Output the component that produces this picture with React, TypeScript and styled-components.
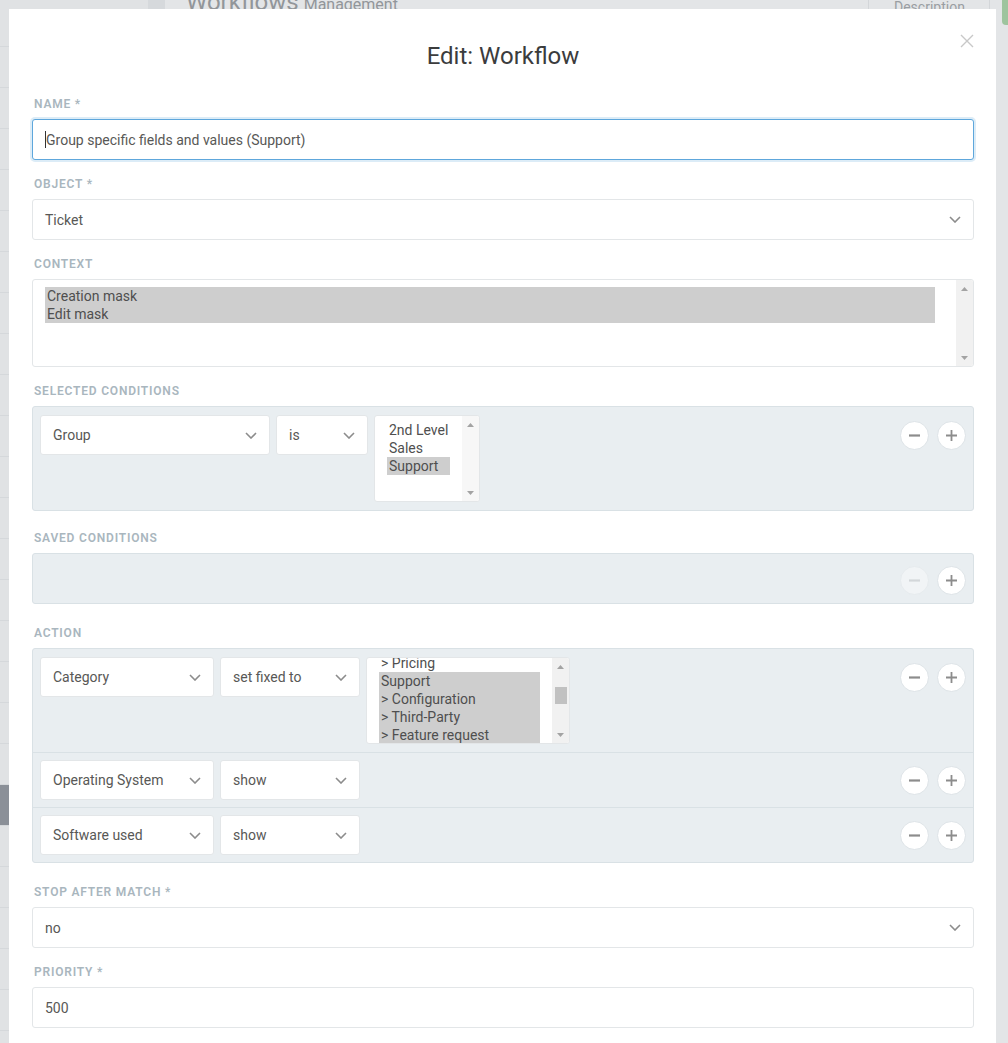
import React from 'react'
import styled, { createGlobalStyle } from 'styled-components'

const GlobalStyle = createGlobalStyle`
  html, body {
    margin: 0;
    padding: 0;
  }
  body {
    background: #dfe1e3;
    font-family: Roboto, 'Noto Sans', sans-serif;
    overflow: hidden;
  }
  * {
    box-sizing: border-box;
  }
`

// ---- dimmed app behind the modal ----

const Page = styled.div`
  position: relative;
  display: flex;
  width: 1008px;
  height: 1043px;
  overflow: hidden;
`

const Nav = styled.div`
  width: 148px;
  flex-shrink: 0;
  padding-top: 6px;
  display: flex;
  flex-direction: column;
  background: #e0e2e4;
`

const NavItem = styled.div<{ $active?: boolean }>`
  height: 41px;
  flex-shrink: 0;
  border-bottom: 1px solid #d5d8db;
  background: ${({ $active }) => ($active ? '#8b9098' : 'transparent')};
`

const NavDivider = styled.div`
  width: 17px;
  flex-shrink: 0;
  background: #d6d9dc;
`

const Main = styled.div`
  flex: 1;
  background: #e3e5e7;
`

const MainHeader = styled.div`
  display: flex;
  align-items: baseline;
  height: 30px;
  margin-top: -10px;
  padding-left: 21px;
  color: #92969a;
`

const PageTitle = styled.span`
  font-size: 24px;
  line-height: 24px;
  margin-right: 5px;
`

const PageSubtitle = styled.span`
  font-size: 16px;
`

const TabCell = styled.div`
  margin-left: auto;
  align-self: flex-start;
  width: 122px;
  height: 40px;
  padding: 10px 0 0 25px;
  border-left: 1px solid #d3d6d9;
  border-right: 1px solid #d3d6d9;
  font-size: 14px;
  line-height: 14px;
  color: #9a9ea2;
`

const GreenButton = styled.div`
  align-self: flex-start;
  flex-shrink: 0;
  width: 90px;
  height: 35px;
  margin-left: 12px;
  margin-right: -84px;
  border-radius: 4px;
  background: #9ec49e;
`

// ---- modal ----

const Modal = styled.div`
  position: absolute;
  top: 9px;
  left: 9px;
  width: 987px;
  height: 1100px;
  padding: 0 22px 0 23px;
  background: #fff;
  color: #585856;
`

const ModalHeader = styled.div`
  position: relative;
  padding: 32px 0 25px;
  text-align: center;
`

const Title = styled.h1`
  margin: 0;
  font-size: 24px;
  font-weight: 400;
  line-height: 30px;
  color: #3b3c3d;
`

const Close = styled.div`
  position: absolute;
  top: 24px;
  right: 0;
  width: 14px;
  height: 14px;
  color: #c8c8c8;
`

const Field = styled.div<{ $after?: number }>`
  display: flex;
  flex-direction: column;
  gap: 6px;
  margin-bottom: ${({ $after }) => $after ?? 16}px;
`

const Label = styled.div`
  padding-left: 2px;
  font-size: 12px;
  line-height: 17px;
  font-weight: 600;
  letter-spacing: 0.8px;
  text-transform: uppercase;
  color: #a9b6be;
`

const InputBox = styled.div<{ $focused?: boolean }>`
  display: flex;
  align-items: center;
  height: 41px;
  padding: 0 12px;
  border: 1px solid ${({ $focused }) => ($focused ? '#5ea7dc' : '#e3e6e8')};
  border-radius: 3px;
  box-shadow: ${({ $focused }) => ($focused ? '0 0 0 2px rgba(94, 167, 220, 0.22)' : 'none')};
  background: #fff;
  font-size: 14px;
  color: #585856;
`

const Caret = styled.span`
  display: inline-block;
  width: 1px;
  height: 17px;
  background: #333;
`

const SelectBox = styled.div<{ $width?: number; $height?: number }>`
  display: flex;
  align-items: center;
  justify-content: space-between;
  flex-shrink: 0;
  width: ${({ $width }) => ($width ? `${$width}px` : '100%')};
  height: ${({ $height }) => $height ?? 41}px;
  padding: 0 12px;
  border: 1px solid #e3e6e8;
  border-radius: 3px;
  background: #fff;
  font-size: 14px;
  color: #585856;
`

const ListBox = styled.div<{ $width?: number; $height: number }>`
  display: flex;
  flex-shrink: 0;
  width: ${({ $width }) => ($width ? `${$width}px` : '100%')};
  height: ${({ $height }) => $height}px;
  border: 1px solid #e3e6e8;
  border-radius: 3px;
  background: #fff;
  overflow: hidden;
`

const Options = styled.div<{ $pad: string; $shift?: number }>`
  flex: 1;
  padding: ${({ $pad }) => $pad};
  margin-top: ${({ $shift }) => -($shift ?? 0)}px;
`

const Option = styled.div<{ $selected?: boolean }>`
  height: 18px;
  padding: 0 2px;
  font-size: 14px;
  line-height: 18px;
  white-space: nowrap;
  color: #4f4f4f;
  background: ${({ $selected }) => ($selected ? '#cecece' : 'transparent')};
`

const Track = styled.div<{ $light?: boolean }>`
  display: flex;
  flex-direction: column;
  align-items: center;
  width: 17px;
  flex-shrink: 0;
  background: ${({ $light }) => ($light ? '#f7f7f7' : '#f1f1f1')};
`

const ArrowCell = styled.div`
  display: flex;
  align-items: center;
  justify-content: center;
  width: 17px;
  height: 17px;
  flex-shrink: 0;
`

const TrackSpace = styled.div`
  flex: 1;
`

const Thumb = styled.div<{ $top: number }>`
  width: 12px;
  height: 17px;
  margin-top: ${({ $top }) => $top}px;
  background: #c1c1c1;
`

const RuleBox = styled.div`
  display: flex;
  flex-direction: column;
  border: 1px solid #d9e1e5;
  border-radius: 3px;
  background: #e9eef1;
`

const RuleRow = styled.div<{ $tall?: boolean }>`
  display: flex;
  align-items: flex-start;
  gap: 6px;
  padding: ${({ $tall }) => ($tall ? '8px 7px' : '7px')};

  & + & {
    border-top: 1px solid #d9e1e5;
  }
`

const EmptyRow = styled.div`
  display: flex;
  justify-content: flex-end;
  padding: 12px 7px 8px;
`

const Buttons = styled.div<{ $height?: number }>`
  display: flex;
  align-items: center;
  gap: 8px;
  height: ${({ $height }) => $height ?? 40}px;
  margin-left: auto;
`

const CircleButton = styled.div<{ $disabled?: boolean }>`
  display: flex;
  align-items: center;
  justify-content: center;
  width: 29px;
  height: 29px;
  border-radius: 50%;
  border: 1px solid ${({ $disabled }) => ($disabled ? '#e6ebee' : '#dde3e7')};
  background: ${({ $disabled }) => ($disabled ? '#f1f4f6' : '#fff')};
  color: ${({ $disabled }) => ($disabled ? '#d3d7da' : '#8c8c8c')};
`

const Chevron = () => (
  <svg width="12" height="7" viewBox="0 0 12 7" fill="none">
    <path d="M1 1l5 5 5-5" stroke="#8c8c8c" strokeWidth="1.6" />
  </svg>
)

const Minus = () => (
  <svg width="11" height="11" viewBox="0 0 11 11">
    <path d="M0 5.5h11" stroke="currentColor" strokeWidth="2.2" />
  </svg>
)

const Plus = () => (
  <svg width="11" height="11" viewBox="0 0 11 11">
    <path d="M0 5.5h11M5.5 0v11" stroke="currentColor" strokeWidth="1.8" />
  </svg>
)

const ArrowUp = () => (
  <svg width="7" height="4" viewBox="0 0 7 4">
    <path d="M0 4h7L3.5 0z" fill="#a3a3a3" />
  </svg>
)

const ArrowDown = () => (
  <svg width="7" height="4" viewBox="0 0 7 4">
    <path d="M0 0h7L3.5 4z" fill="#a3a3a3" />
  </svg>
)

type Opt = { label: string; selected?: boolean }

const MultiSelect = ({
  options,
  width,
  height,
  pad,
  shift,
  thumb,
  light,
}: {
  options: Opt[]
  width?: number
  height: number
  pad: string
  shift?: number
  thumb?: number
  light?: boolean
}) => (
  <ListBox $width={width} $height={height}>
    <Options $pad={pad} $shift={shift}>
      {options.map((o) => (
        <Option key={o.label} $selected={o.selected}>
          {o.label}
        </Option>
      ))}
    </Options>
    <Track $light={light}>
      <ArrowCell>
        <ArrowUp />
      </ArrowCell>
      {thumb !== undefined && <Thumb $top={thumb} />}
      <TrackSpace />
      <ArrowCell>
        <ArrowDown />
      </ArrowCell>
    </Track>
  </ListBox>
)

const Select = ({ value, width, height }: { value: string; width?: number; height?: number }) => (
  <SelectBox $width={width} $height={height}>
    <span>{value}</span>
    <Chevron />
  </SelectBox>
)

const RowButtons = ({ disabled, height }: { disabled?: boolean; height?: number }) => (
  <Buttons $height={height}>
    <CircleButton $disabled={disabled}>
      <Minus />
    </CircleButton>
    <CircleButton>
      <Plus />
    </CircleButton>
  </Buttons>
)

export default function App() {
  return (
    <Page>
      <GlobalStyle />
      <Nav>
        {Array.from({ length: 26 }).map((_, i) => (
          <NavItem key={i} $active={i === 19} />
        ))}
      </Nav>
      <NavDivider />
      <Main>
        <MainHeader>
          <PageTitle>Workflows</PageTitle>
          <PageSubtitle>Management</PageSubtitle>
          <TabCell>Description</TabCell>
          <GreenButton />
        </MainHeader>
      </Main>

      <Modal>
        <ModalHeader>
          <Title>Edit: Workflow</Title>
          <Close>
            <svg width="14" height="14" viewBox="0 0 14 14">
              <path d="M1 1l12 12M13 1L1 13" stroke="currentColor" strokeWidth="1.4" />
            </svg>
          </Close>
        </ModalHeader>

        <Field>
          <Label>Name *</Label>
          <InputBox $focused>
            <Caret />
            Group specific fields and values (Support)
          </InputBox>
        </Field>

        <Field>
          <Label>Object *</Label>
          <Select value="Ticket" />
        </Field>

        <Field>
          <Label>Context</Label>
          <MultiSelect
            height={88}
            pad="7px 21px 7px 12px"
            options={[
              { label: 'Creation mask', selected: true },
              { label: 'Edit mask', selected: true },
            ]}
          />
        </Field>

        <Field $after={19}>
          <Label>Selected Conditions</Label>
          <RuleBox>
            <RuleRow $tall>
              <Select value="Group" width={230} height={40} />
              <Select value="is" width={92} height={40} />
              <MultiSelect
                width={106}
                height={87}
                pad="5px 12px"
                light
                options={[
                  { label: '2nd Level' },
                  { label: 'Sales' },
                  { label: 'Support', selected: true },
                ]}
              />
              <RowButtons />
            </RuleRow>
          </RuleBox>
        </Field>

        <Field $after={21}>
          <Label>Saved Conditions</Label>
          <RuleBox>
            <EmptyRow>
              <RowButtons disabled height={29} />
            </EmptyRow>
          </RuleBox>
        </Field>

        <Field $after={21}>
          <Label>Action</Label>
          <RuleBox>
            <RuleRow $tall>
              <Select value="Category" width={174} height={40} />
              <Select value="set fixed to" width={140} height={40} />
              <MultiSelect
                width={204}
                height={87}
                pad="0 12px"
                shift={4}
                thumb={12}
                options={[
                  { label: '> Pricing' },
                  { label: 'Support', selected: true },
                  { label: '> Configuration', selected: true },
                  { label: '> Third-Party', selected: true },
                  { label: '> Feature request', selected: true },
                ]}
              />
              <RowButtons />
            </RuleRow>
            <RuleRow>
              <Select value="Operating System" width={174} height={40} />
              <Select value="show" width={140} height={40} />
              <RowButtons />
            </RuleRow>
            <RuleRow>
              <Select value="Software used" width={174} height={40} />
              <Select value="show" width={140} height={40} />
              <RowButtons />
            </RuleRow>
          </RuleBox>
        </Field>

        <Field>
          <Label>Stop after match *</Label>
          <Select value="no" />
        </Field>

        <Field>
          <Label>Priority *</Label>
          <InputBox>500</InputBox>
        </Field>
      </Modal>
    </Page>
  )
}
